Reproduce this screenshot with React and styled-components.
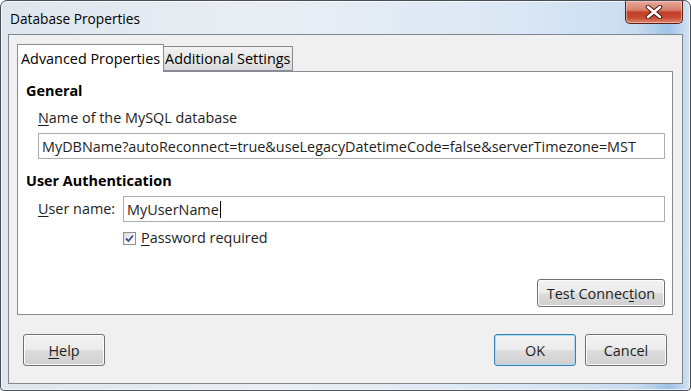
import React from 'react'
import styled, { createGlobalStyle } from 'styled-components'

const GlobalStyle = createGlobalStyle`
    html, body {
        margin: 0;
        padding: 0;
        background: #ffffff;
    }
    body {
        font-family: "Open Sans", "Noto Sans", "Liberation Sans", sans-serif;
    }
`

const Window = styled.div`
    width: 691px;
    height: 391px;
    box-sizing: border-box;
    border: 1px solid #4a4f55;
    border-radius: 7px 7px 4px 4px;
    background: linear-gradient(90deg, #dfe6ee 0%, #e9eef4 40%, #dbe7f4 75%, #c9dcef 92%, #9fc3e8 97%, #d6e4f2 100%);
    display: flex;
    flex-direction: column;
    overflow: hidden;
    box-shadow: inset 0 0 0 1px rgba(255, 255, 255, 0.7);
`

const TitleBar = styled.div`
    height: 33px;
    display: flex;
    align-items: flex-start;
    justify-content: space-between;
    padding: 0 7px 0 9px;
`

const Title = styled.span`
    font-size: 13.7px;
    color: #000;
    margin-top: 8px;
`

const CloseButton = styled.div`
    width: 56px;
    height: 22px;
    border: 1px solid #5b2119;
    border-top: none;
    border-radius: 0 0 5px 5px;
    background: linear-gradient(180deg, #e9a99c 0%, #d9826f 40%, #c2402a 52%, #c84a33 75%, #db8a72 100%);
    display: flex;
    align-items: center;
    justify-content: center;
    box-shadow: inset 0 0 0 1px rgba(255, 220, 210, 0.5);
`

const Client = styled.div`
    flex: 1;
    margin: 0 7px 6px 7px;
    border: 1px solid #7f8790;
    background: #f0f0f0;
    display: flex;
    flex-direction: column;
    padding: 9px 9px 0 8px;
    font-size: 14.4px;
`

const TabStrip = styled.div`
    display: flex;
    align-items: flex-end;
    height: 27px;
    position: relative;
    z-index: 1;
`

const Tab = styled.div`
    box-sizing: border-box;
    height: ${p => (p.active ? '28px' : '25px')};
    padding: 0 ${p => (p.active ? '3px' : '2px')} 0 ${p => (p.active ? '3px' : '1px')};
    border: 1px solid #898c95;
    border-bottom: ${p => (p.active ? 'none' : '1px solid #898c95')};
    border-left: ${p => (p.active ? '1px solid #898c95' : 'none')};
    background: ${p => (p.active ? '#ffffff' : 'linear-gradient(180deg, #f3f3f3 0%, #e6e6e6 50%, #dadada 100%)')};
    color: #000;
    display: flex;
    align-items: center;
    margin-bottom: ${p => (p.active ? '-1px' : '0')};
    white-space: nowrap;
`

const TabPanel = styled.div`
    height: 244px;
    box-sizing: border-box;
    border: 1px solid #898c95;
    background: #ffffff;
    padding: 9px 7px 0 8px;
    display: flex;
    flex-direction: column;
`

const SectionTitle = styled.div`
    font-weight: bold;
    color: #000;
    line-height: 20px;
`

const Label = styled.div`
    color: #1e1e1e;
    line-height: 20px;
    white-space: nowrap;
`

const Underline = styled.span`
    text-decoration: underline;
    text-underline-offset: 2px;
`

const Indented = styled.div`
    padding-left: 12px;
    display: flex;
    flex-direction: column;
`

const TextInput = styled.div`
    box-sizing: border-box;
    height: 26px;
    border: 1px solid #abadb3;
    background: #fff;
    color: #1e1e1e;
    padding: 0 3px;
    display: flex;
    align-items: center;
    white-space: nowrap;
    flex: 1;
`

const Caret = styled.span`
    display: inline-block;
    width: 1px;
    height: 17px;
    background: #000;
    margin-left: 1px;
`

const Row = styled.div`
    display: flex;
    align-items: center;
    gap: ${p => p.gap || 0}px;
`

const CheckRow = styled.div`
    display: flex;
    align-items: center;
    gap: 5px;
    padding-left: 85px;
    margin-top: 6px;
`

const CheckBox = styled.div`
    width: 13px;
    height: 13px;
    box-sizing: border-box;
    border: 1px solid #8e8f8f;
    background: linear-gradient(135deg, #dcdcdc 0%, #f4f4f4 60%, #fefefe 100%);
    display: flex;
    align-items: center;
    justify-content: center;
`

const Button = styled.div`
    box-sizing: border-box;
    width: ${p => p.width || 82}px;
    height: ${p => p.height || 32}px;
    border: 1px solid ${p => (p.primary ? '#3c7fb1' : '#707070')};
    border-radius: 3px;
    background: linear-gradient(180deg, #f2f2f2 0%, #ebebeb 50%, #dddddd 51%, #cfcfcf 100%);
    box-shadow: inset 0 0 0 1px ${p => (p.primary ? '#a9dbf6' : '#fcfcfc')};
    color: #1e1e1e;
    display: flex;
    align-items: center;
    justify-content: center;
    white-space: nowrap;
`

const Spacer = styled.div`
    flex: 1;
`

const Footer = styled.div`
    display: flex;
    align-items: center;
    gap: 9px;
    padding: 19px 6px 0 6px;
`

export default function App() {
    return (
        <>
            <GlobalStyle />
            <Window>
                <TitleBar>
                    <Title>Database Properties</Title>
                    <CloseButton>
                        <svg width="18" height="14" viewBox="0 0 18 14">
                            <path d="M3 2 L15 12 M15 2 L3 12" stroke="#4a1a12" strokeWidth="4.5" strokeLinecap="round" />
                            <path d="M3 2 L15 12 M15 2 L3 12" stroke="#ffffff" strokeWidth="2.6" strokeLinecap="round" />
                        </svg>
                    </CloseButton>
                </TitleBar>
                <Client>
                    <TabStrip>
                        <Tab active>Advanced Properties</Tab>
                        <Tab>Additional Settings</Tab>
                    </TabStrip>
                    <TabPanel>
                        <SectionTitle>General</SectionTitle>
                        <Indented>
                            <Label style={{ marginTop: 7 }}><Underline>N</Underline>ame of the MySQL database</Label>
                            <Row style={{ marginTop: 5 }}>
                                <TextInput>MyDBName?autoReconnect=true&amp;useLegacyDatetimeCode=false&amp;serverTimezone=MST</TextInput>
                            </Row>
                        </Indented>
                        <SectionTitle style={{ marginTop: 12 }}>User Authentication</SectionTitle>
                        <Indented style={{ marginTop: 5 }}>
                            <Row gap={8}>
                                <Label><Underline>U</Underline>ser name:</Label>
                                <TextInput>MyUserName<Caret /></TextInput>
                            </Row>
                            <CheckRow>
                                <CheckBox>
                                    <svg width="9" height="9" viewBox="0 0 9 9">
                                        <path d="M1 4.5 L3.5 7 L8 1.5" stroke="#3a4f8a" strokeWidth="1.8" fill="none" />
                                    </svg>
                                </CheckBox>
                                <Label><Underline>P</Underline>assword required</Label>
                            </CheckRow>
                        </Indented>
                        <Row style={{ marginTop: 31 }}>
                            <Spacer />
                            <Button width={128} height={28}>Test Connec<Underline>t</Underline>ion</Button>
                        </Row>
                    </TabPanel>
                    <Footer>
                        <Button><Underline>H</Underline>elp</Button>
                        <Spacer />
                        <Button primary>OK</Button>
                        <Button>Cancel</Button>
                    </Footer>
                </Client>
            </Window>
        </>
    )
}
